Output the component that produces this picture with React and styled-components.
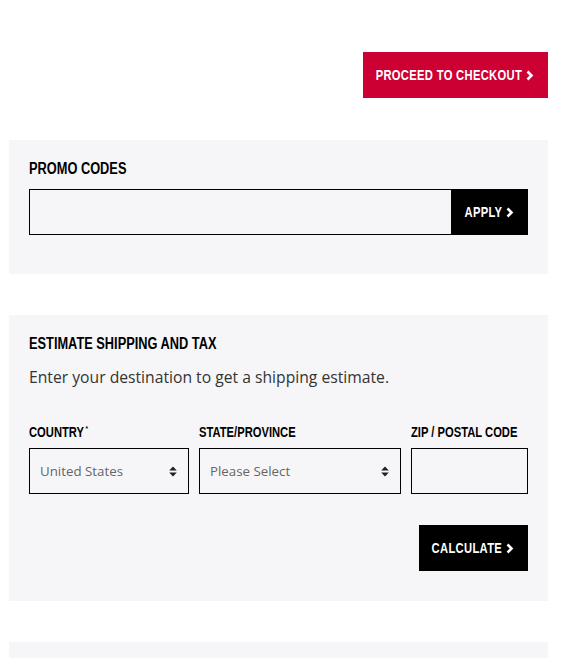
import styled, { createGlobalStyle } from 'styled-components';

const GlobalStyle = createGlobalStyle`
  body {
    margin: 0;
    background: #fff;
    font-family: "Open Sans", sans-serif;
  }
`;

const condensed = `"Liberation Sans", Arial, sans-serif`;

const Page = styled.div`
  width: 562px;
  box-sizing: border-box;
  padding: 52px 14px 0 9px;
  display: flex;
  flex-direction: column;
  gap: 41px;
`;

const TopBar = styled.div`
  display: flex;
  justify-content: flex-end;
  margin-bottom: 1px;
`;

// narrow display type: no condensed face is installed, so squeeze a bold sans
const Squeeze = styled.span`
  display: inline-block;
  flex-shrink: 0;
  white-space: nowrap;
  transform: scaleX(0.8);
  transform-origin: ${(p) => p.$origin || 'left'} center;
`;

const Button = styled.button`
  display: flex;
  align-items: center;
  justify-content: flex-end;
  gap: 4px;
  width: ${(p) => p.$w}px;
  height: 46px;
  padding: 0 14px 0 0;
  border: none;
  background: ${(p) => (p.$red ? '#cc0033' : '#000')};
  color: #fff;
  font-family: ${condensed};
  font-weight: 700;
  font-size: 14px;
  letter-spacing: 0.4px;
  text-transform: uppercase;
  cursor: pointer;
  flex-shrink: 0;
  overflow: visible;

  svg {
    flex-shrink: 0;
  }
`;

const Panel = styled.section`
  background: #f6f6f8;
  padding: 20px 20px ${(p) => p.$bottom || 30}px;
  min-height: ${(p) => p.$minHeight || 0}px;
`;

const Title = styled.h2`
  margin: 0;
  font-family: ${condensed};
  font-weight: 700;
  font-size: 16px;
  line-height: 18px;
  color: #000;
  text-transform: uppercase;
`;

const PromoRow = styled.div`
  display: flex;
  margin-top: 11px;
`;

const TextInput = styled.input`
  flex: 1;
  min-width: 0;
  width: 100%;
  height: 46px;
  box-sizing: border-box;
  border: 1px solid #000;
  border-right: ${(p) => (p.$joined ? 'none' : '1px solid #000')};
  background: transparent;
  padding: 0 10px;
  font-size: 14px;
  outline: none;
`;

const Intro = styled.p`
  margin: 12px 0 0;
  font-size: 15.7px;
  line-height: 24px;
  color: #333;
`;

const Fields = styled.div`
  display: grid;
  grid-template-columns: 160px 202px 117px;
  gap: 10px;
  margin-top: 35px;
`;

const Field = styled.div`
  display: flex;
  flex-direction: column;
  gap: 8px;
`;

const Label = styled.label`
  display: block;
  height: 16px;
  font-family: ${condensed};
  font-weight: 700;
  font-size: 14px;
  line-height: 16px;
  color: #000;
  text-transform: uppercase;
  sup {
    font-size: 8px;
    line-height: 0;
    margin-left: 2px;
  }
`;

const SelectBox = styled.div`
  height: 46px;
  box-sizing: border-box;
  border: 1px solid #000;
  display: flex;
  align-items: center;
  justify-content: space-between;
  padding: 0 11px 0 10px;
  font-size: 13.3px;
  color: #666;
`;

const Actions = styled.div`
  display: flex;
  justify-content: flex-end;
  margin-top: 31px;
`;

const Chevron = () => (
  <svg width="8" height="11" viewBox="0 0 8 11" aria-hidden="true">
    <path d="M1.5 1.5 L5.5 5.5 L1.5 9.5" fill="none" stroke="#fff" strokeWidth="2.6" />
  </svg>
);

const UpDown = () => (
  <svg width="8" height="11" viewBox="0 0 8 11" aria-hidden="true">
    <path d="M4 0.5 L7.8 4.5 H0.2 Z M4 10.5 L7.8 6.5 H0.2 Z" fill="#222" />
  </svg>
);

const Select = ({ value }) => (
  <SelectBox>
    <span>{value}</span>
    <UpDown />
  </SelectBox>
);

const Action = ({ children, ...rest }) => (
  <Button {...rest}>
    <Squeeze $origin="right">{children}</Squeeze>
    <Chevron />
  </Button>
);

export default function App() {
  return (
    <>
      <GlobalStyle />
      <Page>
        <TopBar>
          <Action $red $w={185}>Proceed to checkout</Action>
        </TopBar>

        <Panel $bottom={39}>
          <Title>
            <Squeeze>Promo codes</Squeeze>
          </Title>
          <PromoRow>
            <TextInput $joined />
            <Action $w={77}>Apply</Action>
          </PromoRow>
        </Panel>

        <Panel>
          <Title>
            <Squeeze>Estimate shipping and tax</Squeeze>
          </Title>
          <Intro>Enter your destination to get a shipping estimate.</Intro>
          <Fields>
            <Field>
              <Label>
                <Squeeze>
                  Country<sup>*</sup>
                </Squeeze>
              </Label>
              <Select value="United States" />
            </Field>
            <Field>
              <Label>
                <Squeeze>State/Province</Squeeze>
              </Label>
              <Select value="Please Select" />
            </Field>
            <Field>
              <Label>
                <Squeeze>Zip / Postal code</Squeeze>
              </Label>
              <TextInput />
            </Field>
          </Fields>
          <Actions>
            <Action $w={109}>Calculate</Action>
          </Actions>
        </Panel>

        <Panel $minHeight={80} />
      </Page>
    </>
  );
}
